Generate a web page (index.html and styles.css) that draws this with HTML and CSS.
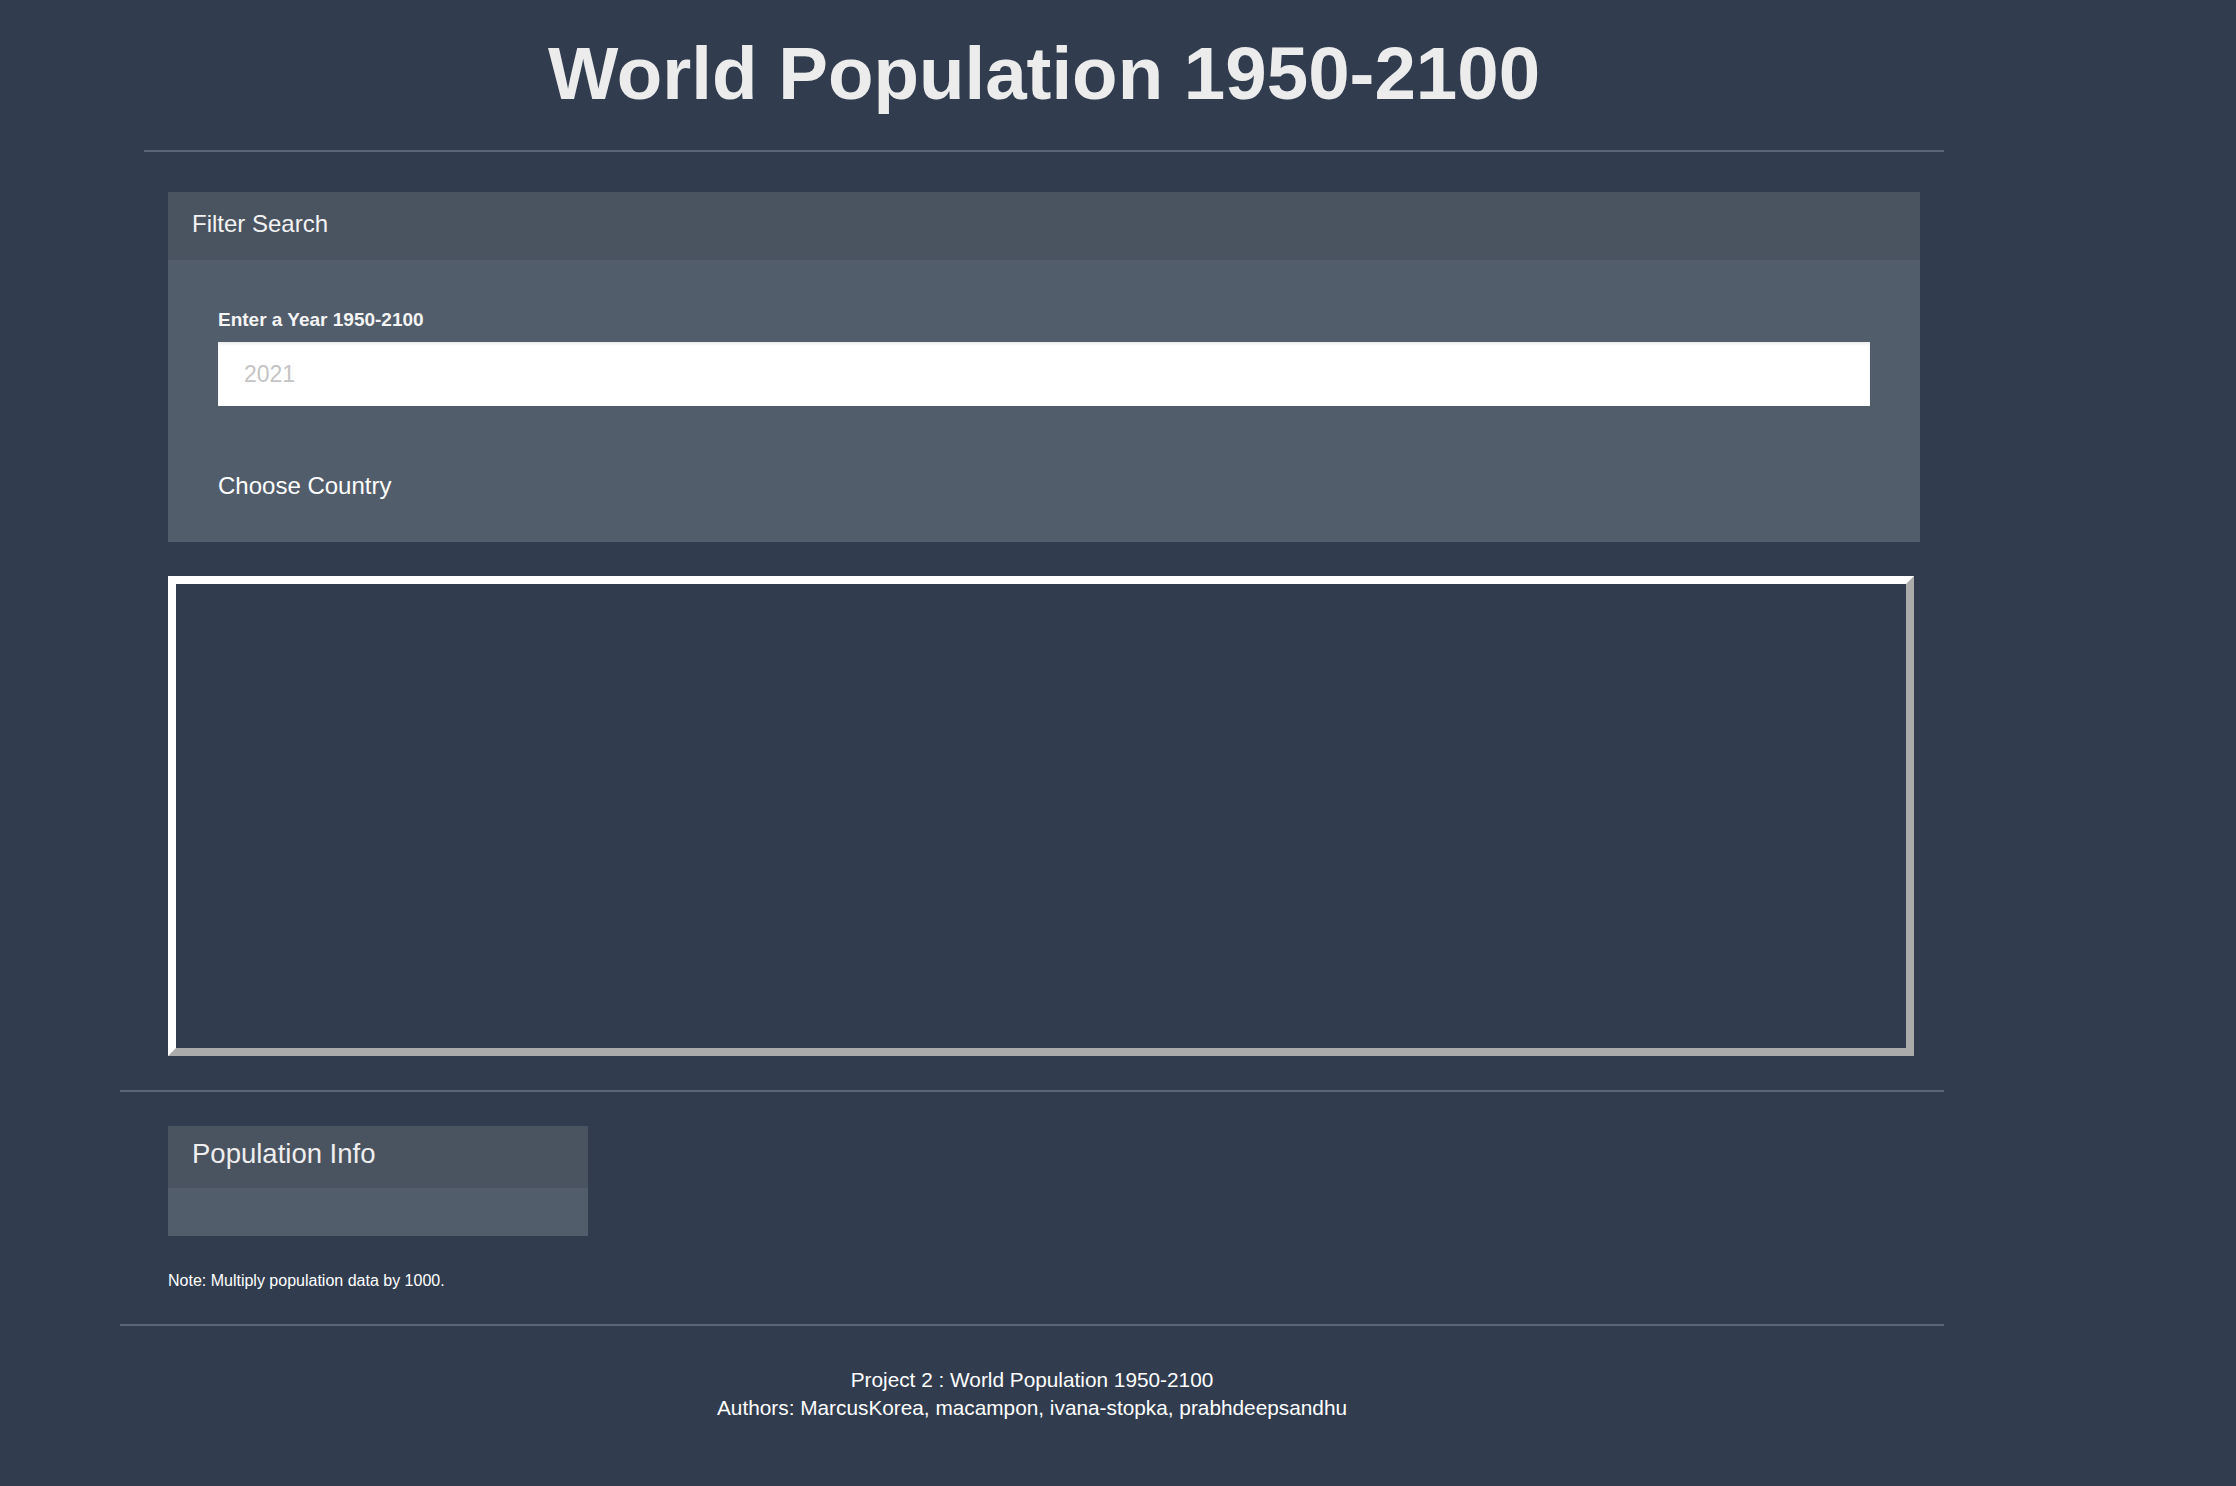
FILE: index.html
```html
<!DOCTYPE html>
<html lang="en">
<head>
<meta charset="utf-8">
<title>World Population 1950-2100</title>
<link rel="stylesheet" href="styles.css">
</head>
<body>
<div class="page">
  <header class="site-header">
    <h1 class="title">World Population 1950-2100</h1>
    <div class="rule rule-top"></div>
  </header>

  <main class="content">
    <section class="card filter-card">
      <div class="card-header">Filter Search</div>
      <div class="filter-body">
        <label class="field-label" for="year">Enter a Year 1950-2100</label>
        <input id="year" class="year-input" type="text" placeholder="2021">
        <div class="choose">Choose Country</div>
      </div>
    </section>
    <div class="chart-box"></div>
  </main>

  <div class="rule rule-mid"></div>

  <section class="info">
    <div class="card info-card">
      <div class="card-header info-header">Population Info</div>
      <div class="info-body"></div>
    </div>
    <p class="note">Note: Multiply population data by 1000.</p>
  </section>

  <div class="rule rule-bottom"></div>

  <footer class="site-footer">
    <div>Project 2 : World Population 1950-2100</div>
    <div>Authors: MarcusKorea, macampon, ivana-stopka, prabhdeepsandhu</div>
  </footer>
</div>
</body>
</html>
```

FILE: styles.css
```css
html, body {
  margin: 0;
  padding: 0;
}

body {
  background: #313d4f;
  color: #ffffff;
  font-family: "Liberation Sans", Arial, Helvetica, sans-serif;
  min-height: 1486px;
}

.page {
  width: 1824px;
  margin-left: 120px;
}

.site-header {
  margin-left: 24px;
  padding-top: 31px;
}

.title {
  margin: 0;
  font-size: 74.5px;
  line-height: 86px;
  font-weight: 700;
  text-align: center;
  color: #ececec;
}

.rule {
  height: 2px;
  background: #5a6577;
}

.rule-top {
  margin-top: 33px;
}

.content {
  padding-left: 48px;
  padding-top: 40px;
}

.card {
  background: #525d6b;
}

.filter-card {
  width: 1752px;
}

.card-header {
  background: #4a5461;
  padding: 18px 24px 22px;
  font-size: 24px;
  line-height: 28px;
  color: #f2f2f2;
}

.filter-body {
  background: #525d6b;
  padding: 49px 50px 42px;
}

.field-label {
  display: block;
  font-size: 19px;
  font-weight: 700;
  line-height: 22px;
  margin-bottom: 11px;
  color: #f4f4f4;
}

.year-input {
  display: block;
  width: 100%;
  height: 64px;
  box-sizing: border-box;
  border: 0;
  margin: 0;
  padding: 0 26px;
  font-family: inherit;
  font-size: 23px;
  color: #333;
  background: #ffffff;
  box-shadow: inset 0 2px 3px rgba(0, 0, 0, 0.08);
  outline: none;
}

.year-input::placeholder {
  color: #c4c4c4;
}

.choose {
  margin-top: 66px;
  font-size: 24px;
  line-height: 28px;
  color: #ffffff;
}

.chart-box {
  margin-top: 34px;
  width: 1746px;
  height: 480px;
  box-sizing: border-box;
  border: 8px outset #ffffff;
}

.rule-mid {
  margin-top: 34px;
}

.info {
  padding-left: 48px;
  padding-top: 34px;
}

.info-card {
  width: 420px;
}

.info-header {
  padding: 12px 24px 18px;
  font-size: 27.5px;
  line-height: 32px;
  color: #eeeeee;
}

.info-body {
  height: 48px;
  background: #525d6b;
}

.note {
  margin: 35.5px 0 0;
  font-size: 16px;
  line-height: 18px;
  color: #ffffff;
}

.rule-bottom {
  margin-top: 34.5px;
}

.site-footer {
  padding-top: 40px;
  text-align: center;
  font-size: 20.8px;
  line-height: 28.4px;
  color: #ffffff;
}
```
